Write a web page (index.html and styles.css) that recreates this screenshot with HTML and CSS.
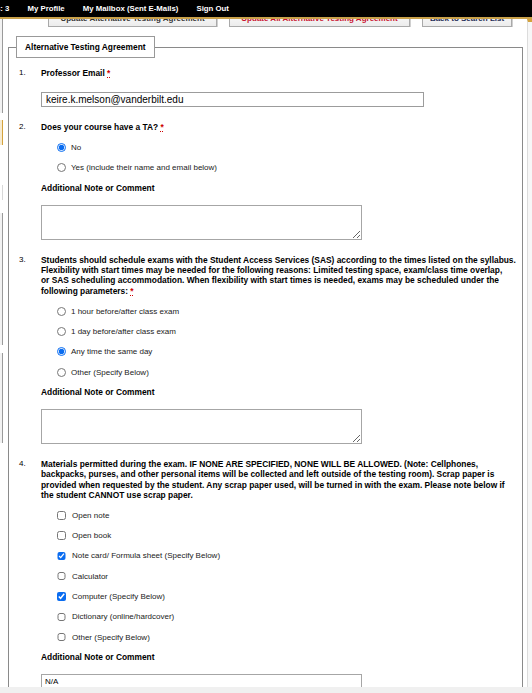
FILE: index.html
```html
<!DOCTYPE HTML><html>
<head>
  <title>Alternative Testing Agreement</title>
  <meta name="viewport" content="width=device-width, initial-scale=1">
  <link rel="icon" href="data:,">
  <link rel="stylesheet" href="styles.css">
</head>
<body>
  <div class="topnav">
    <span class="count">s: 3</span>
    <a href="#">My Profile</a>
    <a href="#">My Mailbox (Sent E-Mails)</a>
    <a href="#">Sign Out</a>
  </div>
  <div class="layout">
    <div class="edge-left">
      <div class="seg grey" style="height:94px"></div>
      <div class="seg" style="height:7px"></div>
      <div class="seg gold" style="height:25px"></div>
      <div class="seg" style="height:40px"></div>
      <div class="seg light" style="height:15px"></div>
      <div class="seg" style="height:13px"></div>
      <div class="seg grey" style="height:132px"></div>
      <div class="seg" style="height:8px"></div>
      <div class="seg grey" style="height:90px"></div>
    </div>
    <div class="content">
      <div class="toolbar">
        <button class="btn btn-update">Update Alternative Testing Agreement</button>
        <button class="btn btn-all">Update All Alternative Testing Agreement</button>
        <button class="btn btn-back">Back to Search List</button>
      </div>
      <fieldset class="agreement">
        <legend>Alternative Testing Agreement</legend>
        <ol class="questions">
          <li class="q">
            <span class="q-num">1.</span>
            <div class="q-body">
              <div class="q-label">Professor Email <abbr class="req" title="required">*</abbr></div>
              <input class="email" type="text" value="keire.k.melson@vanderbilt.edu">
            </div>
          </li>
          <li class="q">
            <span class="q-num">2.</span>
            <div class="q-body">
              <div class="q-label">Does your course have a TA? <abbr class="req" title="required">*</abbr></div>
              <div class="options">
                <label class="opt"><input type="radio" name="ta" checked>No</label>
                <label class="opt"><input type="radio" name="ta">Yes (include their name and email below)</label>
                <div class="opt note-label">Additional Note or Comment</div>
              </div>
              <textarea class="note"></textarea>
            </div>
          </li>
          <li class="q">
            <span class="q-num">3.</span>
            <div class="q-body">
              <div class="q-label">Students should schedule exams with the Student Access Services (SAS) according to the times listed on the syllabus. Flexibility with start times may be needed for the following reasons: Limited testing space, exam/class time overlap, or&nbsp;SAS scheduling accommodation. When flexibility with start times is needed, exams may be scheduled under the following parameters: <abbr class="req" title="required">*</abbr></div>
              <div class="options">
                <label class="opt"><input type="radio" name="time">1 hour before/after class exam</label>
                <label class="opt"><input type="radio" name="time">1 day before/after class exam</label>
                <label class="opt"><input type="radio" name="time" checked>Any time the same day</label>
                <label class="opt"><input type="radio" name="time">Other (Specify Below)</label>
                <div class="opt note-label">Additional Note or Comment</div>
              </div>
              <textarea class="note"></textarea>
            </div>
          </li>
          <li class="q">
            <span class="q-num">4.</span>
            <div class="q-body">
              <div class="q-label">Materials permitted during the exam. IF NONE ARE SPECIFIED, NONE WILL BE ALLOWED. (Note: Cellphones, backpacks, purses, and other personal items will be collected and left outside of the testing room). Scrap paper is provided when requested by the student. Any scrap paper used, will be turned in with the exam. Please note below if the student CANNOT use scrap paper.</div>
              <div class="options">
                <label class="opt"><input type="checkbox">Open note</label>
                <label class="opt"><input type="checkbox">Open book</label>
                <label class="opt"><input type="checkbox" checked>Note card/ Formula sheet (Specify Below)</label>
                <label class="opt"><input type="checkbox">Calculator</label>
                <label class="opt"><input type="checkbox" checked>Computer (Specify Below)</label>
                <label class="opt"><input type="checkbox">Dictionary (online/hardcover)</label>
                <label class="opt"><input type="checkbox">Other (Specify Below)</label>
                <div class="opt note-label">Additional Note or Comment</div>
              </div>
              <textarea class="note">N/A</textarea>
            </div>
          </li>
        </ol>
      </fieldset>
    </div>
    <div class="edge-right"></div>
  </div>
  <div class="hscroll"></div>
</body>
</html>
```

FILE: styles.css
```css
html {
  font-family: "Liberation Sans", Arial, sans-serif;
}
body {
  margin: 0;
  font-size: 8px;
  color: #000;
  background-color: #fff;
  overflow: hidden;
}
.topnav {
  display: flex;
  align-items: center;
  gap: 18px;
  height: 17px;
  background-color: #000;
  border-bottom: 2px solid #c9a14a;
  color: #fff;
  font-size: 7.8px;
  font-weight: bold;
  white-space: nowrap;
}
.topnav a {
  color: #fff;
  text-decoration: none;
}
/* the counter label is scrolled past the left edge */
.count {
  margin-left: -4px;
}
.layout {
  display: flex;
}
.edge-left {
  width: 3px;
  flex: none;
}
.seg {
  width: 2px;
  border-right: 1px solid transparent;
}
.seg.grey {
  border-right-color: #9a9a9a;
  background-color: #f2f2f2;
}
.seg.gold {
  border-right-color: #d3a23c;
  background-color: #f6ead0;
}
.seg.light {
  border-right-color: #d8d8d8;
}
.content {
  flex: 1;
  min-width: 0;
}
.edge-right {
  width: 4px;
  flex: none;
  background-color: #f7f7f7;
  border-left: 1px solid #dcdcdc;
  border-top: 3px solid #d3a23c;
}

/* action buttons, mostly scrolled under the nav */
.toolbar {
  display: flex;
  align-items: flex-end;
  gap: 12px;
  height: 8px;
  overflow: hidden;
  padding-left: 45px;
}
.btn {
  flex: none;
  display: flex;
  align-items: flex-end;
  justify-content: center;
  height: 18px;
  padding: 0 0 2px;
  box-sizing: border-box;
  border: 1px solid #a9a9a9;
  border-top: none;
  background: linear-gradient(#ffffff, #ececec);
  box-shadow: 1px 1px 0 #d0d0d0;
  font-family: inherit;
  font-size: 8px;
  font-weight: bold;
  line-height: 10px;
  white-space: nowrap;
}
.btn-update {
  width: 169px;
  color: #333;
}
.btn-all {
  width: 181px;
  color: #c8102e;
}
.btn-back {
  width: 90px;
  color: #1d2b55;
}

/* form */
.agreement {
  width: 515px;
  box-sizing: border-box;
  margin: 9px 0 0 5px;
  padding: 0;
  border: 1px solid #8a8a8a;
}
.agreement legend {
  margin-left: 7px;
  padding: 0 8px;
  border: 1px solid #999;
  background-color: #fff;
  font-size: 8.4px;
  font-weight: bold;
  line-height: 20px;
}
.questions {
  list-style: none;
  margin: 10px 0 0;
  padding: 0 6px 0 10px;
}
.q {
  display: grid;
  grid-template-columns: 22px 1fr;
  margin-bottom: 15px;
}
.q-num {
  line-height: 10.2px;
}
.q-label {
  font-size: 8.4px;
  font-weight: bold;
  line-height: 10.2px;
}
.req {
  color: #cc0000;
  text-decoration: underline dotted #cc0000;
  cursor: help;
}
.email {
  display: block;
  width: 383px;
  height: 15px;
  box-sizing: border-box;
  margin: 13.9px 0 0;
  padding: 0 4px;
  border: 1px solid #9c9c9c;
  font-family: inherit;
  font-size: 10px;
  color: #000;
}
.options {
  margin-top: 5.1px;
}
.opt {
  display: flex;
  align-items: center;
  height: 20.3px;
  padding-left: 16px;
  color: #222;
}
.opt input {
  margin: 0 5px 0 0;
  width: 9px;
  height: 9px;
  accent-color: #0a6cf0;
}
.opt input[type="checkbox"] {
  width: 8.5px;
  height: 8.5px;
  margin-right: 6.5px;
}
.note-label {
  padding-left: 0;
  color: #000;
  font-size: 8.4px;
  font-weight: bold;
}
.note {
  display: block;
  width: 321px;
  height: 35px;
  box-sizing: border-box;
  margin: 6.8px 0 0;
  padding: 2px 3px;
  border: 1px solid #a6a6a6;
  font-family: inherit;
  font-size: 8px;
  color: #000;
}
.hscroll {
  position: fixed;
  left: 0;
  right: 0;
  bottom: 0;
  height: 6px;
  background-color: #f0f0f0;
}
```
